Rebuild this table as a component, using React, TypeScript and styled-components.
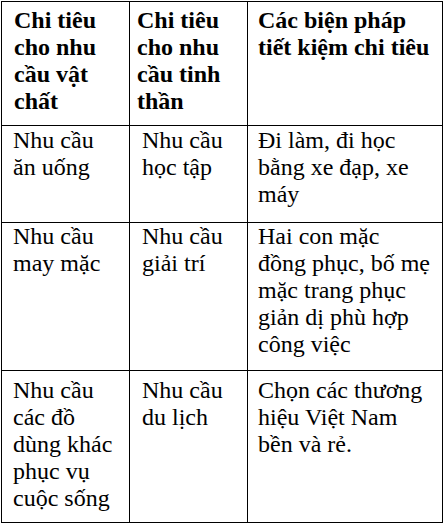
import React from 'react'
import styled, { createGlobalStyle } from 'styled-components'

const GlobalStyle = createGlobalStyle`
  html, body {
    margin: 0;
    padding: 0;
    background: #ffffff;
  }
`

const Page = styled.div`
  padding: 1px 0 0 1px;
  font-family: "Liberation Serif", "Times New Roman", serif;
  color: #000000;
`

const Table = styled.table`
  border-collapse: collapse;
  table-layout: fixed;
  width: 442px;
  font-family: "Liberation Serif", "Times New Roman", serif;
  font-size: 24px;
  line-height: 27px;
`

const Col = styled.col<{ $w: number }>`
  width: ${p => p.$w}px;
`

const Row = styled.tr<{ $h: number }>`
  height: ${p => p.$h}px;
`

const Cell = styled.td<{ $pt: number, $pl: number, $pr: number, $head?: boolean }>`
  border: 1px solid #000;
  vertical-align: top;
  padding: ${p => `${p.$pt}px ${p.$pr}px 0 ${p.$pl}px`};
  font-family: "Liberation Serif", "Times New Roman", serif;
  font-size: 24px;
  line-height: 27px;
  font-weight: ${p => (p.$head ? 700 : 400)};
`

const headers = [
  'Chi tiêu cho nhu cầu vật chất',
  'Chi tiêu cho nhu cầu tinh thần',
  'Các biện pháp tiết kiệm chi tiêu',
]

const rows: Array<{ h: number, pt: number, cells: string[] }> = [
  {
    h: 97,
    pt: 1,
    cells: ['Nhu cầu ăn uống', 'Nhu cầu học tập', 'Đi làm, đi học bằng xe đạp, xe máy'],
  },
  {
    h: 148,
    pt: 0,
    cells: [
      'Nhu cầu may mặc',
      'Nhu cầu giải trí',
      'Hai con mặc đồng phục, bố mẹ mặc trang phục giản dị phù hợp công việc',
    ],
  },
  {
    h: 152,
    pt: 6,
    cells: [
      'Nhu cầu các đồ dùng khác phục vụ cuộc sống',
      'Nhu cầu du lịch',
      'Chọn các thương hiệu Việt Nam bền và rẻ.',
    ],
  },
]

// left / right padding per column, header row differs in column 2
const headPad = [[12, 11], [7, 8], [10, 10]]
const bodyPad = [[11, 12], [12, 8], [10, 10]]

const App: React.FC = () => {
  return (
    <Page>
      <GlobalStyle />
      <Table>
        <colgroup>
          <Col $w={128} />
          <Col $w={118} />
          <Col $w={195} />
        </colgroup>
        <tbody>
          <Row $h={124}>
            {headers.map((text, i) => (
              <Cell key={text} $pt={5} $pl={headPad[i][0]} $pr={headPad[i][1]} $head>
                {text}
              </Cell>
            ))}
          </Row>
          {rows.map(row => (
            <Row key={row.cells[0]} $h={row.h}>
              {row.cells.map((text, i) => (
                <Cell key={text} $pt={row.pt} $pl={bodyPad[i][0]} $pr={bodyPad[i][1]}>
                  {text}
                </Cell>
              ))}
            </Row>
          ))}
        </tbody>
      </Table>
    </Page>
  )
}

export default App
